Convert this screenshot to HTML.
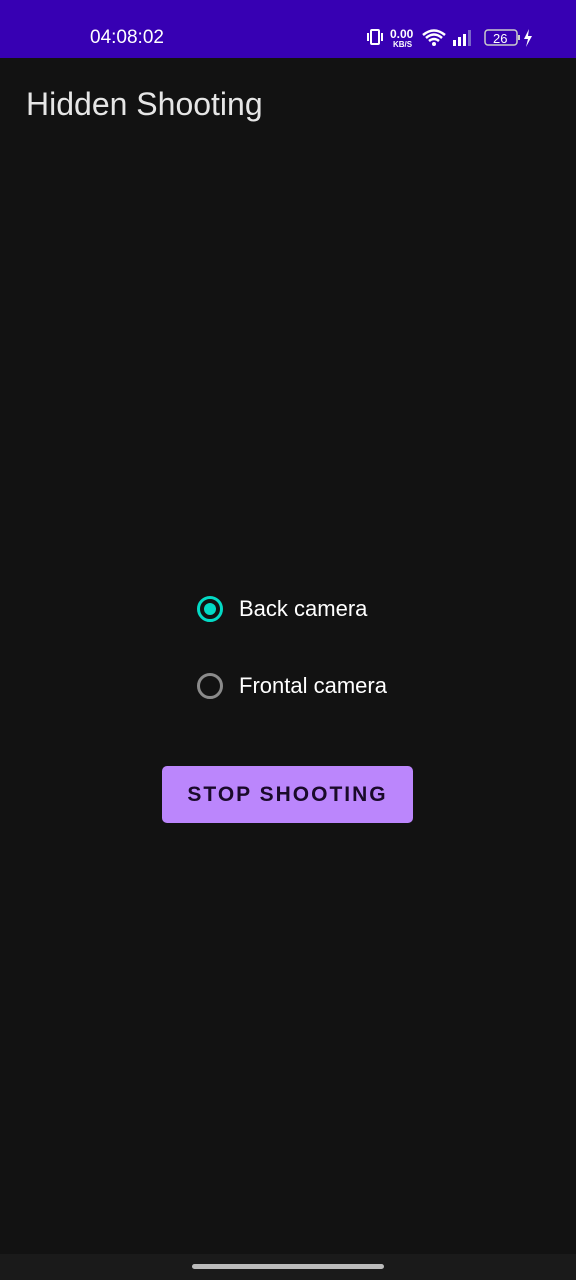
<!DOCTYPE html>
<html><head><style>
body{margin:0;width:576px;height:1280px;background:#121212;position:relative;overflow:hidden;font-family:"Liberation Sans",sans-serif;}
.sb{position:absolute;left:0;top:0;width:576px;height:58px;background:#3700b3;color:#fff;}
.t{position:absolute;left:90px;top:27px;font-size:19px;}
.title{position:absolute;left:26px;top:86px;font-size:32px;color:#e6e6e6;}
.rb{position:absolute;left:197px;width:26px;height:26px;box-sizing:border-box;border-radius:50%;border:3px solid #8a8a8a;}
.rl{position:absolute;left:239px;font-size:22px;color:#fff;}
.btn{position:absolute;left:162px;top:766px;width:251px;height:57px;background:#bb86fc;border-radius:5px;color:#1a0a2a;font-size:21px;letter-spacing:2px;text-align:center;line-height:58px;font-weight:bold;}
.nav{position:absolute;left:0;top:1254px;width:576px;height:26px;background:#1a1a1a;}
.pill{position:absolute;left:192px;top:1264px;width:192px;height:5px;border-radius:3px;background:#bbb;}
</style></head><body>
<div class="sb"><div class="t">04:08:02</div>
<svg style="position:absolute;left:366px;top:27px" width="180" height="22" viewBox="0 0 180 22">
<rect x="5" y="3" width="8" height="14" rx="1" fill="none" stroke="#fff" stroke-width="2"/><line x1="2" y1="6" x2="2" y2="14" stroke="#fff" stroke-width="2"/><line x1="16" y1="6" x2="16" y2="14" stroke="#fff" stroke-width="2"/>
<text x="24" y="11" fill="#fff" font-size="12" font-weight="bold" font-family="Liberation Sans">0.00</text>
<text x="27" y="20" fill="#fff" font-size="8" font-weight="bold" font-family="Liberation Sans">KB/S</text>
<path d="M57 8 Q68 -1 79 8 M60 11 Q68 4 76 11 M63 14 Q68 10 73 14" stroke="#fff" stroke-width="2.5" fill="none"/><circle cx="68" cy="17" r="2" fill="#fff"/>
<rect x="87" y="13" width="3" height="6" fill="#fff"/><rect x="92" y="10" width="3" height="9" fill="#fff"/><rect x="97" y="7" width="3" height="12" fill="#fff"/><rect x="102" y="3" width="3" height="16" fill="#7a66c9"/>
<rect x="119" y="3" width="32" height="15" rx="3" fill="none" stroke="#ccc" stroke-width="1.5"/><rect x="152" y="8" width="2" height="5" fill="#ccc"/>
<text x="127" y="16" fill="#fff" font-size="13" font-family="Liberation Sans">26</text>
<path d="M163 2 L158 12 H162 L160 20 L166 9 H162 Z" fill="#fff"/>
</svg></div>
<div class="title">Hidden Shooting</div>
<div class="rb" style="top:596px;border-color:#03dac5"><div style="position:absolute;left:4px;top:4px;width:12px;height:12px;border-radius:50%;background:#03dac5"></div></div>
<div class="rl" style="top:596px">Back camera</div>
<div class="rb" style="top:673px"></div>
<div class="rl" style="top:673px">Frontal camera</div>
<div class="btn">STOP SHOOTING</div>
<div class="nav"></div><div class="pill"></div>
</body></html>
